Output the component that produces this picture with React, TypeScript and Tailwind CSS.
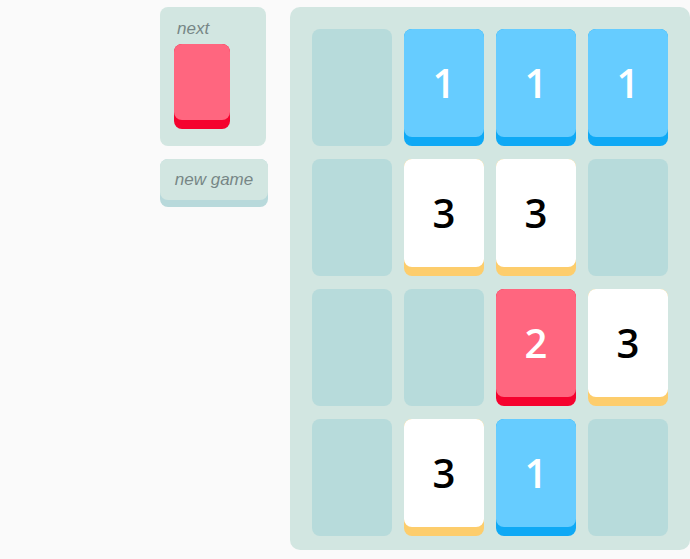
import React from "react";

type Tile = 0 | 1 | 2 | 3;

const board: Tile[][] = [
  [0, 1, 1, 1],
  [0, 3, 3, 0],
  [0, 0, 2, 3],
  [0, 3, 1, 0],
];

function Card({ value }: { value: Tile }) {
  if (value === 0) {
    return <div className="h-[117px] w-[80px] rounded-lg bg-[#b7dbdb]" />;
  }
  const styles = {
    1: { outer: "bg-[#0fa9f5]", inner: "bg-[#66ccff]", text: "text-white" },
    2: { outer: "bg-[#f5022e]", inner: "bg-[#ff667f]", text: "text-white" },
    3: { outer: "bg-[#fdcd6c]", inner: "bg-white", text: "text-black" },
  }[value];
  return (
    <div className={`h-[117px] w-[80px] rounded-lg ${styles.outer}`}>
      <div
        className={`flex h-[108px] items-center justify-center rounded-lg ${styles.inner} ${styles.text} font-['Open_Sans',sans-serif] text-[40px] font-semibold`}
      >
        {value}
      </div>
    </div>
  );
}

export default function App() {
  return (
    <div className="min-h-screen bg-[#fafafa] font-['Liberation_Sans',Arial,sans-serif]">
      <div className="flex gap-[22px] pl-[160px] pt-[7px]">
        {/* Side column */}
        <div className="flex w-[108px] flex-col gap-[13px]">
          <div className="h-[139px] w-[106px] rounded-lg bg-[#d2e6e1] px-[14px] pt-[12px]">
            <div className="pl-[3px] text-[17px] italic leading-[20px] text-[#778686]">next</div>
            <div className="mt-[5px] h-[85px] w-[56px] rounded-lg bg-[#f5022e]">
              <div className="h-[76px] rounded-lg bg-[#ff667f]" />
            </div>
          </div>
          <div className="h-[48px] w-[108px] cursor-pointer rounded-lg bg-[#b8d9db]">
            <div className="flex h-[41px] items-center justify-center rounded-lg bg-[#d2e6e1] text-[17px] italic text-[#778686]">
              new game
            </div>
          </div>
        </div>

        {/* Board */}
        <div className="grid w-[400px] grid-cols-4 gap-x-[12px] gap-y-[13px] rounded-[10px] bg-[#d2e6e1] pb-[14px] pl-[22px] pr-[22px] pt-[22px]">
          {board.flat().map((v, i) => (
            <Card key={i} value={v} />
          ))}
        </div>
      </div>
    </div>
  );
}
